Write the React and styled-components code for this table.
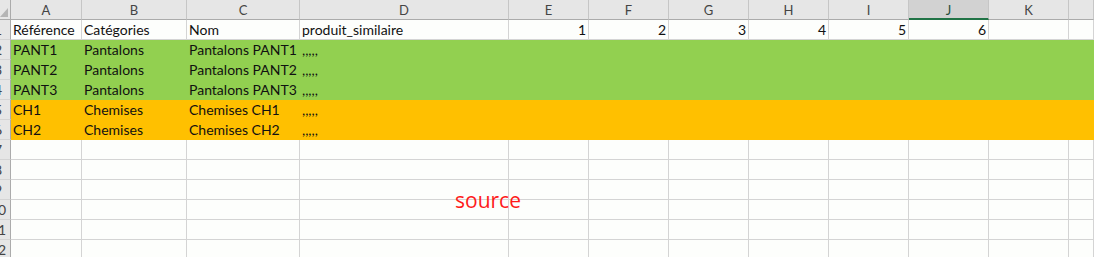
import React from 'react'
import styled, { createGlobalStyle } from 'styled-components'

const GlobalStyle = createGlobalStyle`
  html, body {
    margin: 0;
    padding: 0;
    background: #fdfefc;
    overflow: hidden;
  }
  body {
    font-family: Lato, 'Liberation Sans', sans-serif;
  }
`

const fills = {
  green: '#92d050',
  orange: '#ffc000',
}

const columns = ['A', 'B', 'C', 'D', 'E', 'F', 'G', 'H', 'I', 'J', 'K', '']
const activeCol = 'J'

const rows = [
  { cells: ['Référence', 'Catégories', 'Nom', 'produit_similaire', 1, 2, 3, 4, 5, 6] },
  { fill: 'green', cells: ['PANT1', 'Pantalons', 'Pantalons PANT1', ',,,,,'] },
  { fill: 'green', cells: ['PANT2', 'Pantalons', 'Pantalons PANT2', ',,,,,'] },
  { fill: 'green', cells: ['PANT3', 'Pantalons', 'Pantalons PANT3', ',,,,,'] },
  { fill: 'orange', cells: ['CH1', 'Chemises', 'Chemises CH1', ',,,,,'] },
  { fill: 'orange', cells: ['CH2', 'Chemises', 'Chemises CH2', ',,,,,'] },
  { cells: [] },
  { cells: [] },
  { cells: [] },
  { cells: [] },
  { cells: [] },
  { cells: [] },
  { cells: [] },
]

export default function App() {
  return (
    <Page>
      <GlobalStyle />
      <Sheet>
        <Corner>
          <svg width="10" height="20" viewBox="0 0 10 20">
            <polygon points="8,8 8,17 0,17" fill="#b5b5b5" />
          </svg>
        </Corner>
        {columns.map((col, i) => (
          <ColHead key={i} $active={col === activeCol}>
            {col}
          </ColHead>
        ))}

        {rows.map((row, r) => (
          <React.Fragment key={r}>
            {/* row numbers sit in a narrow gutter, only their right edge shows */}
            <RowHead>
              <RowNum>{r + 1}</RowNum>
            </RowHead>
            {columns.map((_, c) => {
              const value = row.cells[c]
              return (
                <Cell
                  key={c}
                  $fill={row.fill}
                  $num={typeof value === 'number'}
                >
                  {value}
                </Cell>
              )
            })}
          </React.Fragment>
        ))}
      </Sheet>
      <Note>source</Note>
    </Page>
  )
}

const Page = styled.div`
  position: relative;
  width: 1094px;
  height: 257px;
  overflow: hidden;
`

const Sheet = styled.div`
  display: grid;
  grid-template-columns: 11px 71px 105px 113px 209px repeat(7, 80px) 1fr;
  grid-auto-rows: 20px;
`

const Corner = styled.div`
  box-sizing: border-box;
  background: #e6e6e6;
  border-right: 1px solid #ababab;
  border-bottom: 1px solid #ababab;
  display: flex;
  align-items: flex-start;
`

const ColHead = styled.div`
  box-sizing: border-box;
  display: flex;
  justify-content: center;
  background: ${(p) => (p.$active ? '#d2d2d2' : '#e6e6e6')};
  border-right: 1px solid #c6c6c6;
  border-bottom: ${(p) => (p.$active ? '2px solid #217346' : '1px solid #ababab')};
  color: ${(p) => (p.$active ? '#1f4e3d' : '#444444')};
  font-size: 13px;
  line-height: 20px;
`

const RowHead = styled.div`
  box-sizing: border-box;
  overflow: hidden;
  display: flex;
  background: #e6e6e6;
  border-right: 1px solid #ababab;
  border-bottom: 1px solid #d4d4d4;
`

const RowNum = styled.span`
  flex-shrink: 0;
  width: 26px;
  margin-left: -15px;
  text-align: center;
  color: #444444;
  font-size: 14px;
  line-height: 20px;
`

const Cell = styled.div`
  box-sizing: border-box;
  overflow: visible;
  white-space: nowrap;
  padding: 0 2px;
  text-align: ${(p) => (p.$num ? 'right' : 'left')};
  background: ${(p) => (p.$fill ? fills[p.$fill] : '#fdfefc')};
  border-right: 1px solid ${(p) => (p.$fill ? fills[p.$fill] : '#d4d4d4')};
  border-bottom: 1px solid ${(p) => (p.$fill ? fills[p.$fill] : '#d4d4d4')};
  color: #111111;
  font-size: 14px;
  line-height: 20px;
`

const Note = styled.div`
  position: absolute;
  left: 455px;
  top: 190px;
  color: #ff1a1a;
  font-family: 'Open Sans', sans-serif;
  font-size: 21px;
  line-height: 20px;
`
